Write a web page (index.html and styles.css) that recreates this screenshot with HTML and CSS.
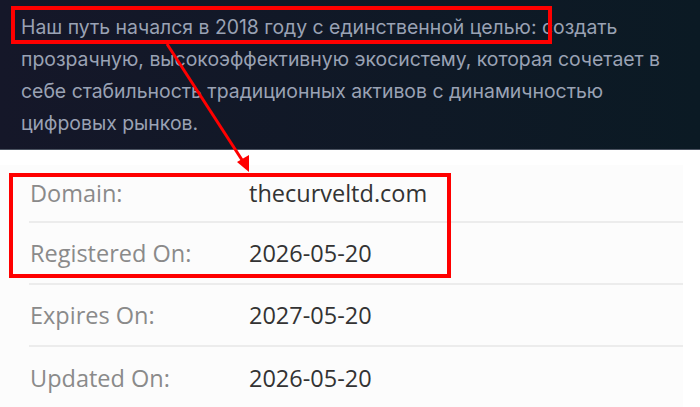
FILE: index.html
```html
<!DOCTYPE html>
<html lang="ru">
<head>
    <meta charset="UTF-8">
    <meta name="viewport" content="width=device-width, initial-scale=1.0">
    <title>thecurveltd.com</title>
    <link rel="stylesheet" href="styles.css">
</head>
<body>
    <!-- О компании -->
    <section class="about">
        <p class="about-text">Наш путь начался в 2018 году с единственной целью: создать прозрачную, высокоэффективную экосистему, которая сочетает в себе стабильность традиционных активов с динамичностью цифровых рынков.</p>
    </section>

    <!-- Whois -->
    <section class="whois">
        <div class="whois-row">
            <div class="whois-label">Domain:</div>
            <div class="whois-value">thecurveltd.com</div>
        </div>
        <div class="whois-row">
            <div class="whois-label">Registered On:</div>
            <div class="whois-value">2026-05-20</div>
        </div>
        <div class="whois-row">
            <div class="whois-label">Expires On:</div>
            <div class="whois-value">2027-05-20</div>
        </div>
        <div class="whois-row">
            <div class="whois-label">Updated On:</div>
            <div class="whois-value">2026-05-20</div>
        </div>
    </section>

    <!-- Пометки поверх страницы -->
    <svg class="marks" width="700" height="407" viewBox="0 0 700 407">
        <rect x="13" y="8" width="537" height="34" fill="none" stroke="#ff0000" stroke-width="4"/>
        <rect x="11" y="175" width="438" height="101" fill="none" stroke="#ff0000" stroke-width="4"/>
        <line x1="167" y1="44" x2="244" y2="163" stroke="#ff0000" stroke-width="3"/>
        <polygon points="249,172 237,162 249,155" fill="#ff0000"/>
    </svg>
</body>
</html>
```

FILE: styles.css
```css
:root {
    --hero-left: #151729;
    --hero-right: #0b1a24;
    --hero-text: #9aa2b4;
    --panel-bg: #fcfcfc;
    --row-border: #ececec;
    --label-color: #8a8a8a;
    --value-color: #333333;
}

body {
    margin: 0;
    background-color: #ffffff;
    position: relative;
    overflow: hidden;
}

/* Тёмный блок с описанием */
.about {
    height: 149px;
    background: linear-gradient(90deg, var(--hero-left), var(--hero-right));
    border-bottom: 1px solid #4a5260;
    box-sizing: content-box;
}

.about-text {
    margin: 0;
    padding: 11px 18px 0 21px;
    font-family: 'Inter', sans-serif;
    font-size: 19.4px;
    line-height: 32px;
    color: var(--hero-text);
}

/* Таблица whois */
.whois {
    margin-top: 15px;
    width: 683px;
    background-color: var(--panel-bg);
    font-family: 'Open Sans', sans-serif;
    font-size: 23.5px;
}

.whois-row {
    display: flex;
    align-items: center;
    height: 62px;
    margin-left: 29px;
    border-bottom: 2px solid var(--row-border);
    box-sizing: border-box;
}

.whois-row:first-child {
    height: 58px;
}

.whois-row:last-child {
    border-bottom: none;
}

.whois-label {
    width: 219px;
    padding-left: 1px;
    color: var(--label-color);
}

.whois-value {
    color: var(--value-color);
}

.marks {
    position: absolute;
    top: 0;
    left: 0;
    pointer-events: none;
}
```
